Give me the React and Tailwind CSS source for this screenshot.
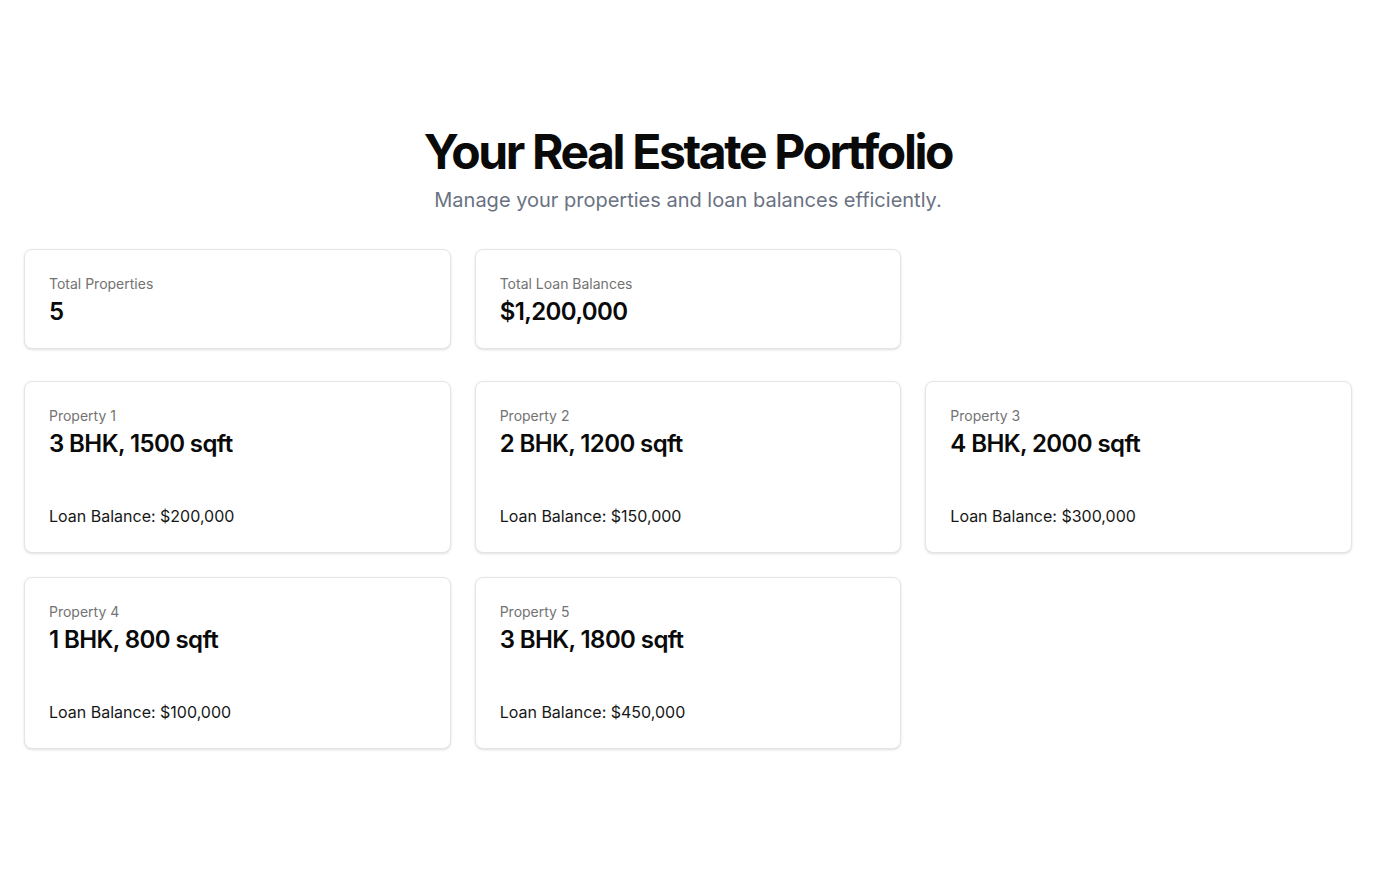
import React from 'react';

const properties = [
  { name: 'Property 1', details: '3 BHK, 1500 sqft', loan: '$200,000' },
  { name: 'Property 2', details: '2 BHK, 1200 sqft', loan: '$150,000' },
  { name: 'Property 3', details: '4 BHK, 2000 sqft', loan: '$300,000' },
  { name: 'Property 4', details: '1 BHK, 800 sqft', loan: '$100,000' },
  { name: 'Property 5', details: '3 BHK, 1800 sqft', loan: '$450,000' },
];

const Card = ({ children }) => (
  <div className="rounded-lg border border-neutral-200 bg-white text-[#0a0a0a] shadow-sm">{children}</div>
);

const CardHeader = ({ label, value }) => (
  <div className="flex flex-col space-y-1.5 p-6">
    <p className="text-sm leading-5 text-neutral-500">{label}</p>
    <h3 className="text-2xl leading-none font-semibold tracking-tight">{value}</h3>
  </div>
);

const App = () => {
  return (
    <div className="min-h-screen bg-white px-6 pb-6 font-['Inter',sans-serif]">
      <div className="pt-[128px] pb-[35px] text-center">
        <h1 className="text-5xl leading-none font-bold tracking-tighter text-[#0a0a0a]">
          Your Real Estate Portfolio
        </h1>
        <p className="mt-2.5 text-xl leading-7 text-gray-500">
          Manage your properties and loan balances efficiently.
        </p>
      </div>

      <div className="mb-8 grid grid-cols-3 gap-6">
        <Card>
          <CardHeader label="Total Properties" value="5" />
        </Card>
        <Card>
          <CardHeader label="Total Loan Balances" value="$1,200,000" />
        </Card>
      </div>

      <div className="grid grid-cols-3 gap-6">
        {properties.map((p) => (
          <Card key={p.name}>
            <CardHeader label={p.name} value={p.details} />
            <div className="p-6">
              <p className="text-base leading-6 text-[#171717]">Loan Balance: {p.loan}</p>
            </div>
          </Card>
        ))}
      </div>
    </div>
  );
};

export default App;
